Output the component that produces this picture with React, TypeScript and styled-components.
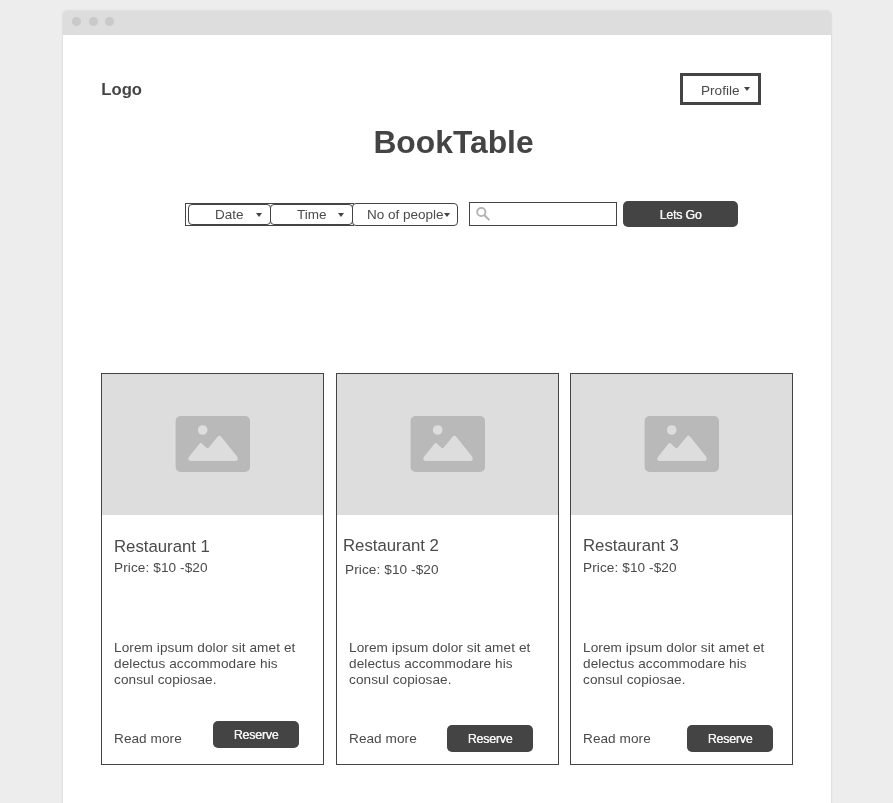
import React from "react";
import styled, { createGlobalStyle } from "styled-components";

const GlobalStyle = createGlobalStyle`
  * { box-sizing: border-box; }
  html, body { margin: 0; background: #ededed; }
  body {
    height: 803px;
    overflow: hidden;
    font-family: "Liberation Sans", Arial, sans-serif;
    font-size: 13.6px;
    color: #444;
  }
`;

const Page = styled.div`
  height: 803px;
  padding: 11px 62px 0 63px;
  overflow: hidden;
`;

const Window = styled.main`
  height: 812px;
  background: #fff;
  border-radius: 4px 4px 0 0;
  box-shadow: 0 0 2px rgba(0, 0, 0, 0.22);
  will-change: transform;
`;

const TitleBar = styled.div`
  display: flex;
  gap: 7.5px;
  height: 24px;
  padding: 6px 9px;
  background: #ddd;
  border-radius: 4px 4px 0 0;
`;

const Dot = styled.span`
  width: 9px;
  height: 9px;
  border-radius: 50%;
  background: #c9c9c9;
`;

const Header = styled.header`
  display: flex;
  justify-content: space-between;
  align-items: center;
  height: 32px;
  margin: 38px 70px 0 38px;
`;

const Logo = styled.div`
  padding: 2px 0 0 0.2px;
  font-size: 16.67px;
  font-weight: bold;
  letter-spacing: 0.05px;
  line-height: 20px;
`;

const ProfileButton = styled.button`
  display: flex;
  align-items: center;
  gap: 4px;
  width: 81px;
  height: 32px;
  padding: 3px 0 0 18px;
  border: 3px solid #444;
  background: #fff;
  color: #4a4a4a;
  font: 13.6px/16px "Liberation Sans", Arial, sans-serif;
`;

const Caret = styled.i<{ $lift?: number }>`
  flex: none;
  width: 0;
  height: 0;
  border: 3px solid transparent;
  border-top: 4px solid #444;
  border-bottom: 0;
  margin-bottom: ${(p) => p.$lift ?? 0}px;
`;

const Title = styled.h1`
  margin: 19px 0 0 13px;
  height: 36px;
  font-size: 31.8px;
  line-height: 36px;
  text-align: center;
`;

const SearchRow = styled.form`
  display: flex;
  align-items: center;
  height: 26px;
  margin: 41px 0 0 122px;
`;

const Filters = styled.div`
  display: flex;
  align-items: center;
  height: 23px;
  width: 273px;
  margin-top: 1px;
`;

const FilterGroup = styled.div`
  display: flex;
  width: 169px;
  height: 23px;
  padding-left: 2px;
  border: 1px solid #444;
`;

const Filter = styled.button<{ $width: number; $pad: number; $gap: number; $tall?: boolean }>`
  display: flex;
  flex: none;
  align-items: center;
  gap: ${(p) => p.$gap}px;
  width: ${(p) => p.$width}px;
  height: ${(p) => (p.$tall ? 23 : 21)}px;
  margin-right: -1px;
  margin-left: ${(p) => (p.$tall ? -2 : 0)}px;
  padding: 0 0 0 ${(p) => p.$pad}px;
  border: 1px solid #444;
  border-radius: 4px;
  background: #fff;
  color: #4a4a4a;
  font: 13.5px/16px "Liberation Sans", Arial, sans-serif;
  white-space: nowrap;
`;

const SearchBox = styled.label`
  width: 148px;
  height: 24px;
  margin-left: 11px;
  padding: 4px 0 0 6px;
  border: 1px solid #444;
`;

const DarkButton = styled.button<{ $width: number; $height: number }>`
  width: ${(p) => p.$width}px;
  height: ${(p) => p.$height}px;
  padding: 1px 0 0;
  border: 0;
  border-radius: 5px;
  background: #444;
  color: #f4f4f4;
  font: 12.4px/16px "Liberation Sans", Arial, sans-serif;
  letter-spacing: -0.2px;
  text-shadow: 0.4px 0 0 #f4f4f4;
`;

const GoButton = styled(DarkButton)`
  margin-left: 6px;
`;

const Cards = styled.section`
  display: grid;
  grid-template-columns: 235px 234px 223px;
  width: 692px;
  margin: 146px 0 0 38px;
`;

const Card = styled.article`
  width: 223px;
  height: 392px;
  border: 1px solid #444;
`;

const Photo = styled.div`
  display: flex;
  align-items: center;
  justify-content: center;
  height: 141px;
  padding-bottom: 1px;
  background: #ddd;
`;

const Name = styled.h2<{ $top: number; $left: number }>`
  height: 20px;
  margin: ${(p) => p.$top}px 0 0 ${(p) => p.$left}px;
  color: #4a4a4a;
  font-size: 16.75px;
  font-weight: normal;
  line-height: 20px;
`;

const Price = styled.p<{ $top: number; $left: number }>`
  height: 16px;
  margin: ${(p) => p.$top}px 0 0 ${(p) => p.$left}px;
  color: #4a4a4a;
  line-height: 16px;
  letter-spacing: 0.1px;
`;

const Heading = styled.div`
  height: 125px;
  overflow: hidden;
`;

const Blurb = styled.p`
  width: 200px;
  height: 48px;
  margin: 0 0 0 12px;
  color: #4a4a4a;
  line-height: 16px;
  letter-spacing: 0.08px;
`;

const Actions = styled.footer<{ $top: number; $right: number }>`
  display: flex;
  justify-content: space-between;
  align-items: flex-start;
  padding: 0 ${(p) => p.$right}px 0 12px;

  button { margin-top: ${(p) => p.$top}px; }
`;

const ReadMore = styled.span`
  margin-top: 43px;
  color: #4a4a4a;
  line-height: 16px;
  letter-spacing: 0.06px;
`;

const restaurants = [
  { name: "Restaurant 1", nameTop: 22, nameLeft: 12, priceTop: 3, priceLeft: 12, buttonTop: 33, right: 24 },
  { name: "Restaurant 2", nameTop: 21, nameLeft: 6, priceTop: 6, priceLeft: 8, buttonTop: 37, right: 25 },
  { name: "Restaurant 3", nameTop: 21, nameLeft: 12, priceTop: 4, priceLeft: 12, buttonTop: 37, right: 19 },
];

const PictureIcon = () => (
  <svg width="75" height="56" viewBox="0 0 75 56">
    <rect x="0.6" width="74.4" height="56" rx="5" fill="#b9b9b9" />
    <circle cx="27.7" cy="14" r="4.8" fill="#ddd" />
    <path
      transform="translate(0.4 0)"
      d="M14.2 40 23.7 28.2Q25.4 26 27.2 28.2L31 31.8Q32.2 32.8 33.4 31.4L42.2 20.8Q44 18.8 45.8 20.8L61.5 40.3Q64 45 59.5 45H15.5Q10.8 44.5 14.2 40Z"
      fill="#ddd"
    />
  </svg>
);

const SearchIcon = () => (
  <svg width="15" height="14" viewBox="0 0 15 14" fill="none" stroke="#b0b0b0">
    <circle cx="5.3" cy="5" r="4.1" strokeWidth="1.8" />
    <path d="m8.2 8 5.2 5.2" strokeWidth="1.9" />
  </svg>
);

export default function App() {
  return (
    <>
      <GlobalStyle />
      <Page>
        <Window>
          <TitleBar>
            <Dot />
            <Dot />
            <Dot />
          </TitleBar>
          <Header>
            <Logo>Logo</Logo>
            <ProfileButton>
              Profile <Caret $lift={3} />
            </ProfileButton>
          </Header>
          <Title>BookTable</Title>
          <SearchRow onSubmit={(e) => e.preventDefault()}>
            <Filters>
              <FilterGroup>
                <Filter type="button" $width={83} $pad={26} $gap={12}>
                  Date <Caret />
                </Filter>
                <Filter type="button" $width={83} $pad={26} $gap={11}>
                  Time <Caret />
                </Filter>
              </FilterGroup>
              <Filter type="button" $width={106} $pad={14} $gap={0} $tall>
                No of people <Caret />
              </Filter>
            </Filters>
            <SearchBox aria-label="Search">
              <SearchIcon />
            </SearchBox>
            <GoButton $width={115} $height={26}>
              Lets Go
            </GoButton>
          </SearchRow>
          <Cards>
            {restaurants.map((r) => (
              <Card key={r.name}>
                <Photo>
                  <PictureIcon />
                </Photo>
                <Heading>
                  <Name $top={r.nameTop} $left={r.nameLeft}>{r.name}</Name>
                  <Price $top={r.priceTop} $left={r.priceLeft}>Price: $10 -$20</Price>
                </Heading>
                <Blurb>Lorem ipsum dolor sit amet et delectus accommodare his consul copiosae.</Blurb>
                <Actions $top={r.buttonTop} $right={r.right}>
                  <ReadMore>Read more</ReadMore>
                  <DarkButton $width={86} $height={27}>Reserve</DarkButton>
                </Actions>
              </Card>
            ))}
          </Cards>
        </Window>
      </Page>
    </>
  );
}
